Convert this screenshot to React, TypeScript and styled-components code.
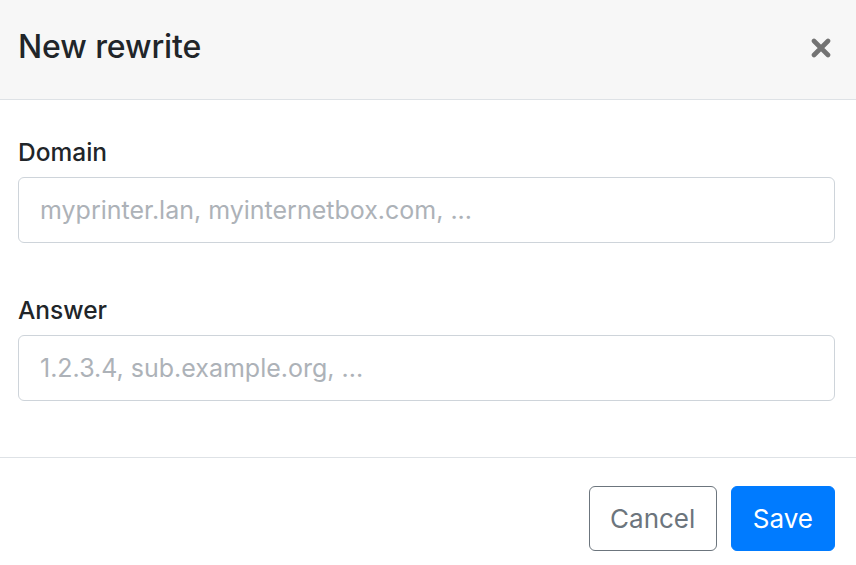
import styled, { createGlobalStyle } from "styled-components"

const Global = createGlobalStyle`
    html, body {
        margin: 0;
        padding: 0;
        background: #ffffff;
    }
    body {
        font-family: Inter, "Noto Sans", "Liberation Sans", sans-serif;
        color: #212529;
    }
    * { box-sizing: border-box; }
`

const Modal = styled.div`
    width: 856px;
    height: 565px;
    display: flex;
    flex-direction: column;
    background: #ffffff;
    overflow: hidden;
`

const Header = styled.div`
    height: 100px;
    flex: none;
    display: flex;
    align-items: center;
    justify-content: space-between;
    padding: 0 24px 6px 18px;
    background: #f7f7f7;
    border-bottom: 1px solid #dee2e6;

    h4 {
        margin: 0;
        font-size: 32px;
        font-weight: 500;
        letter-spacing: -0.1px;
        line-height: 1.5;
    }
`

const Close = styled.button`
    border: 0;
    background: transparent;
    padding: 0;
    margin-top: 3px;
    width: 22px;
    height: 22px;
    display: flex;
    align-items: center;
    justify-content: center;
    color: #737373;
    cursor: pointer;
`

const Body = styled.div`
    flex: 1;
    display: flex;
    flex-direction: column;
    gap: 49px;
    padding: 34px 21px 0 18px;
    border-bottom: 1px solid #dee2e6;
`

const Group = styled.div`
    display: flex;
    flex-direction: column;
    gap: 7px;

    label {
        font-size: 24.5px;
        font-weight: 500;
        line-height: 36px;
    }
`

const Input = styled.input`
    height: 66px;
    width: 100%;
    padding: 0 21px;
    border: 1px solid #ced4da;
    border-radius: 6px;
    font-family: inherit;
    font-size: 25px;
    color: #495057;
    outline: none;

    &::placeholder {
        color: #adb2b8;
    }
`

const Footer = styled.div`
    height: 107px;
    flex: none;
    display: flex;
    justify-content: flex-end;
    align-items: flex-start;
    gap: 14px;
    padding: 28px 21px 0 0;
`

const Button = styled.button<{ $primary?: boolean }>`
    height: 65px;
    padding: 0 ${p => (p.$primary ? 21 : 20.5)}px;
    border-radius: 6px;
    font-family: inherit;
    font-size: 26px;
    font-weight: 400;
    cursor: pointer;
    border: 1px solid ${p => (p.$primary ? "#007bff" : "#6c757d")};
    background: ${p => (p.$primary ? "#007bff" : "#ffffff")};
    color: ${p => (p.$primary ? "#ffffff" : "#6c757d")};
`

export default function App() {
    return (
        <Modal>
            <Global />
            <Header>
                <h4>New rewrite</h4>
                <Close aria-label="Close">
                    <svg width="20" height="20" viewBox="0 0 20 20">
                        <path d="M3 3 L17 17 M17 3 L3 17" stroke="currentColor" strokeWidth="4.6" strokeLinecap="round" />
                    </svg>
                </Close>
            </Header>
            <Body>
                <Group>
                    <label>Domain</label>
                    <Input placeholder="myprinter.lan, myinternetbox.com, ..." />
                </Group>
                <Group>
                    <label>Answer</label>
                    <Input placeholder="1.2.3.4, sub.example.org, ..." />
                </Group>
            </Body>
            <Footer>
                <Button>Cancel</Button>
                <Button $primary>Save</Button>
            </Footer>
        </Modal>
    )
}
